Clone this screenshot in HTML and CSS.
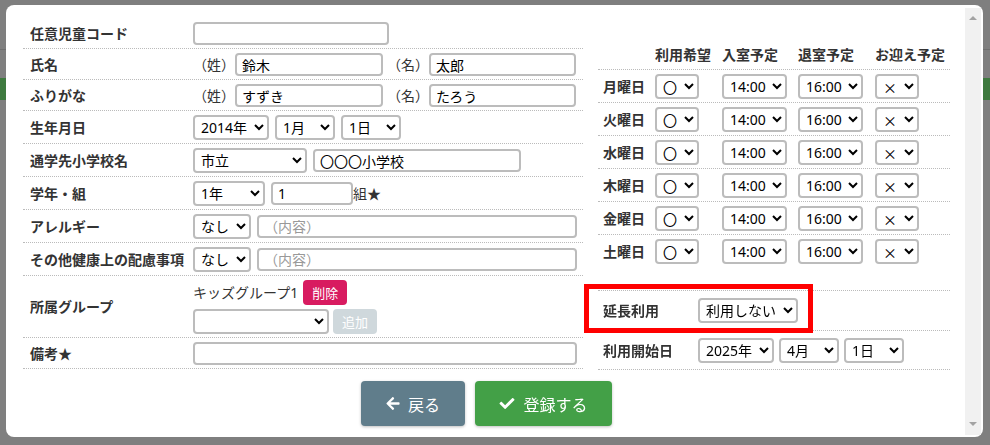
FILE: index.html
```html
<!DOCTYPE html>
<html lang="ja">
  <head>
    <meta charset="UTF-8" />
    <meta name="viewport" content="width=device-width, initial-scale=1.0" />
    <title>児童登録</title>
    <link rel="stylesheet" href="styles.css">
  </head>
  <body>
    <!-- 背景のページ（モーダルの下） -->
    <div class="page-bg">
      <div class="page-head"></div>
      <div class="page-bar"></div>
    </div>

    <div class="overlay">
      <div class="modal">
        <div class="modal-body">
          <div class="form-cols">
            <!-- 左列 -->
            <div class="col-left">
              <div class="row">
                <div class="row-label">任意児童コード</div>
                <div class="ctrl"><input type="text" class="txt w-code" /></div>
              </div>
              <div class="row">
                <div class="row-label">氏名</div>
                <div class="ctrl">
                  <span class="paren">（姓）</span><input type="text" class="txt w-name" value="鈴木" />
                  <span class="paren second">（名）</span><input type="text" class="txt w-name2" value="太郎" />
                </div>
              </div>
              <div class="row">
                <div class="row-label">ふりがな</div>
                <div class="ctrl">
                  <span class="paren">（姓）</span><input type="text" class="txt w-name" value="すずき" />
                  <span class="paren second">（名）</span><input type="text" class="txt w-name2" value="たろう" />
                </div>
              </div>
              <div class="row">
                <div class="row-label">生年月日</div>
                <div class="ctrl gap">
                  <select class="sel w-year"><option>2014年</option></select>
                  <select class="sel w-month"><option>1月</option></select>
                  <select class="sel w-month"><option>1日</option></select>
                </div>
              </div>
              <div class="row">
                <div class="row-label">通学先小学校名</div>
                <div class="ctrl gap">
                  <select class="sel w-city"><option>市立</option></select>
                  <input type="text" class="txt w-school" value="〇〇〇小学校" />
                </div>
              </div>
              <div class="row">
                <div class="row-label">学年・組</div>
                <div class="ctrl gap">
                  <select class="sel w-grade"><option>1年</option></select>
                  <span class="ctrl"><input type="text" class="txt w-class" value="1" />組★</span>
                </div>
              </div>
              <div class="row">
                <div class="row-label">アレルギー</div>
                <div class="ctrl gap">
                  <select class="sel w-none"><option>なし</option></select>
                  <input type="text" class="txt w-memo" placeholder="（内容）" />
                </div>
              </div>
              <div class="row">
                <div class="row-label">その他健康上の配慮事項</div>
                <div class="ctrl gap">
                  <select class="sel w-none"><option>なし</option></select>
                  <input type="text" class="txt w-memo" placeholder="（内容）" />
                </div>
              </div>
              <div class="row">
                <div class="row-label">所属グループ</div>
                <div class="group">
                  <div class="ctrl">
                    <span>キッズグループ1</span>
                    <button class="btn-small del">削除</button>
                  </div>
                  <div class="ctrl">
                    <select class="sel w-group"><option></option></select>
                    <button class="btn-small add" disabled>追加</button>
                  </div>
                </div>
              </div>
              <div class="row">
                <div class="row-label">備考★</div>
                <div class="ctrl"><input type="text" class="txt w-note" /></div>
              </div>
            </div>

            <!-- 右列 -->
            <div class="col-right">
              <div class="wrow whead">
                <div></div>
                <div>利用希望</div>
                <div>入室予定</div>
                <div>退室予定</div>
                <div>お迎え予定</div>
              </div>
              <div class="wrow">
                <div class="wlabel">月曜日</div>
                <div><select class="sel w-mark"><option>〇</option></select></div>
                <div><select class="sel w-time"><option>14:00</option></select></div>
                <div><select class="sel w-time"><option>16:00</option></select></div>
                <div><select class="sel w-mark"><option>×</option></select></div>
              </div>
              <div class="wrow">
                <div class="wlabel">火曜日</div>
                <div><select class="sel w-mark"><option>〇</option></select></div>
                <div><select class="sel w-time"><option>14:00</option></select></div>
                <div><select class="sel w-time"><option>16:00</option></select></div>
                <div><select class="sel w-mark"><option>×</option></select></div>
              </div>
              <div class="wrow">
                <div class="wlabel">水曜日</div>
                <div><select class="sel w-mark"><option>〇</option></select></div>
                <div><select class="sel w-time"><option>14:00</option></select></div>
                <div><select class="sel w-time"><option>16:00</option></select></div>
                <div><select class="sel w-mark"><option>×</option></select></div>
              </div>
              <div class="wrow">
                <div class="wlabel">木曜日</div>
                <div><select class="sel w-mark"><option>〇</option></select></div>
                <div><select class="sel w-time"><option>14:00</option></select></div>
                <div><select class="sel w-time"><option>16:00</option></select></div>
                <div><select class="sel w-mark"><option>×</option></select></div>
              </div>
              <div class="wrow">
                <div class="wlabel">金曜日</div>
                <div><select class="sel w-mark"><option>〇</option></select></div>
                <div><select class="sel w-time"><option>14:00</option></select></div>
                <div><select class="sel w-time"><option>16:00</option></select></div>
                <div><select class="sel w-mark"><option>×</option></select></div>
              </div>
              <div class="wrow last">
                <div class="wlabel">土曜日</div>
                <div><select class="sel w-mark"><option>〇</option></select></div>
                <div><select class="sel w-time"><option>14:00</option></select></div>
                <div><select class="sel w-time"><option>16:00</option></select></div>
                <div><select class="sel w-mark"><option>×</option></select></div>
              </div>

              <div class="ext">
                <div class="erow first">
                  <div class="wlabel">延長利用</div>
                  <div class="ctrl"><select class="sel w-ext"><option>利用しない</option></select></div>
                </div>
                <div class="erow">
                  <div class="wlabel">利用開始日</div>
                  <div class="ctrl gap5">
                    <select class="sel w-year"><option>2025年</option></select>
                    <select class="sel w-month"><option>4月</option></select>
                    <select class="sel w-month"><option>1日</option></select>
                  </div>
                </div>
                <div class="highlight"></div>
              </div>
            </div>
          </div>

          <div class="actions">
            <button class="btn back">
              <svg viewBox="0 0 448 512" width="14" height="15"><path fill="#fff" d="M257.5 445.1l-22.2 22.2c-9.4 9.4-24.6 9.4-33.9 0L7 273c-9.4-9.4-9.4-24.6 0-33.9L201.4 44.7c9.4-9.4 24.6-9.4 33.9 0l22.2 22.2c9.5 9.5 9.3 25-.4 34.3L136.6 216H424c13.3 0 24 10.7 24 24v32c0 13.3-10.7 24-24 24H136.6l120.5 114.8c9.8 9.3 10 24.8.4 34.3z"/></svg>
              戻る
            </button>
            <button class="btn submit">
              <svg viewBox="0 0 512 512" width="16" height="15"><path fill="#fff" d="M173.9 439.4l-166.4-166.4c-10-10-10-26.2 0-36.2l36.2-36.2c10-10 26.2-10 36.2 0L192 312.7 432.1 72.6c10-10 26.2-10 36.2 0l36.2 36.2c10 10 10 26.2 0 36.2l-294.4 294.4c-10 10-26.2 10-36.2 0z"/></svg>
              登録する
            </button>
          </div>
        </div>

        <div class="scrollbar">
          <span class="arrow-up"></span>
          <span class="arrow-down"></span>
        </div>
      </div>
    </div>
  </body>
</html>
```

FILE: styles.css
```css
/* リセット */
* {
  margin: 0;
  padding: 0;
  box-sizing: border-box;
}

body {
  font-family: "Noto Sans", "Noto Sans CJK JP", sans-serif;
  font-size: 14px;
  line-height: 20px;
  color: #333;
  background-color: #7f7f7f;
  width: 990px;
  height: 445px;
  overflow: hidden;
}

/* 背景ページ */
.page-head {
  height: 50px;
  border-bottom: 1px solid #6f6f6f;
}

.page-bar {
  margin-top: 28px;
  height: 22px;
  background-color: #3e7a3f;
}

/* モーダル */
.overlay {
  position: fixed;
  top: 0;
  left: 0;
  right: 0;
  bottom: 0;
}

.modal {
  margin: 5px 0 0 6px;
  width: 977px;
  height: 432px;
  background-color: #fff;
  border-radius: 8px;
  display: flex;
  padding: 3px 2px 2px 0;
}

.modal-body {
  flex: 1;
  padding: 10px 15px 0 17px;
}

.scrollbar {
  width: 16px;
  background-color: #f1f1f1;
  display: flex;
  flex-direction: column;
  justify-content: space-between;
  align-items: center;
  padding: 8px 0 9px;
}

.arrow-up {
  border-left: 4px solid transparent;
  border-right: 4px solid transparent;
  border-bottom: 4px solid #a3a3a3;
}

.arrow-down {
  border-left: 4px solid transparent;
  border-right: 4px solid transparent;
  border-top: 4px solid #a3a3a3;
}

.form-cols {
  display: flex;
  gap: 15px;
}

.col-left {
  width: 560px;
}

.col-right {
  width: 352px;
}

/* 左の行 */
.row {
  display: grid;
  grid-template-columns: 170px 1fr;
  align-items: center;
  padding: 4px 0 3px;
  border-bottom: 1px dotted #bbb;
}

.row-label {
  padding-left: 7px;
  font-weight: bold;
}

.ctrl {
  display: flex;
  align-items: center;
}

.ctrl.gap {
  gap: 6px;
}

.ctrl.gap5 {
  gap: 5px;
}

.group {
  display: flex;
  flex-direction: column;
  gap: 4px;
}

.paren {
  width: 42px;
}

.paren.second {
  margin-left: 4px;
}

/* 入力 */
.txt {
  height: 23px;
  border: 2px solid #bcbcbc;
  border-radius: 4px;
  padding: 0 5px;
  font: inherit;
  color: #000;
  background-color: #fff;
  outline: none;
}

.txt::placeholder {
  color: #999;
}

.sel {
  height: 25px;
  border: 2px solid #bcbcbc;
  border-radius: 4px;
  padding: 0 2px;
  font: inherit;
  color: #000;
  background-color: #fff;
}

.w-code { width: 196px; }
.w-name { width: 148px; }
.w-name2 { width: 147px; }
.w-school { width: 208px; }
.w-class { width: 82px; }
.w-memo { width: 320px; }
.w-note { width: 384px; }

.w-year { width: 76px; }
.w-month { width: 60px; }
.w-city { width: 114px; }
.w-grade { width: 72px; }
.w-none { width: 58px; }
.w-group { width: 136px; }
.w-time { width: 65px; }
.w-ext { width: 100px; }

.w-mark {
  width: 44px;
  font-family: "Noto Sans CJK JP", sans-serif;
}

.btn-small {
  height: 25px;
  padding: 0 9px;
  border: none;
  border-radius: 4px;
  font-family: inherit;
  font-size: 13px;
  color: #fff;
}

.btn-small.del {
  margin-left: 5px;
  background-color: #d81b60;
}

.btn-small.add {
  margin-left: 4px;
  background-color: #cfd8dc;
}

/* 右の週テーブル */
.wrow {
  display: grid;
  grid-template-columns: 57px 67px 76px 77px 75px;
  align-items: center;
  padding: 4px 0 3px;
  border-bottom: 1px dotted #bbb;
}

.wrow.whead {
  padding: 27px 0 4px;
  font-weight: bold;
}

.wrow.last {
  border-bottom: none;
}

.wlabel {
  padding-left: 5px;
  font-weight: bold;
}

.ext {
  position: relative;
  margin-top: 23px;
  border-top: 1px dotted #bbb;
}

.erow {
  display: grid;
  grid-template-columns: 100px 1fr;
  align-items: center;
  padding: 7px 0 6px;
  border-bottom: 1px dotted #bbb;
}

.erow.first {
  padding-bottom: 7px;
}

.highlight {
  position: absolute;
  left: -14px;
  top: -7px;
  width: 229px;
  height: 49px;
  border: 5px solid #f00;
}

/* ボタン */
.actions {
  display: flex;
  justify-content: center;
  gap: 10px;
  margin-top: 11px;
}

.btn {
  height: 45px;
  display: flex;
  align-items: center;
  justify-content: center;
  gap: 8px;
  border: none;
  border-radius: 4px;
  font-family: inherit;
  font-size: 16px;
  color: #fff;
  box-shadow: 0 1px 3px rgba(0, 0, 0, 0.25);
  cursor: pointer;
}

.btn.back {
  width: 104px;
  background-color: #607d8b;
}

.btn.submit {
  width: 137px;
  background-color: #43a047;
}
```
